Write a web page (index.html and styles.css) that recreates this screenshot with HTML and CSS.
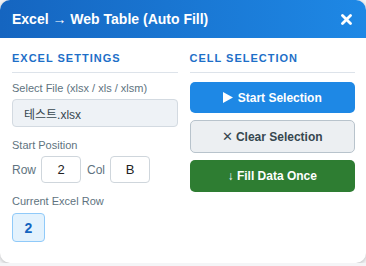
FILE: index.html
```html
<!doctype html>
<html>
    <head>
        <title>Excel to Web Table</title>
        <link rel="stylesheet" href="styles.css">
    </head>
    <body>
        <div class="panel">
            <div class="header">
                <span class="title">Excel → Web Table (Auto Fill)</span>
                <span class="close">
                    <svg width="11" height="11" viewBox="0 0 11 11"><path d="M1.5 1.5L9.5 9.5M9.5 1.5L1.5 9.5" stroke="#fff" stroke-width="2.8" stroke-linecap="round"/></svg>
                </span>
            </div>
            <div class="content">
                <div class="col">
                    <h3 class="section-title">Excel Settings</h3>
                    <div class="label">Select File (xlsx / xls / xlsm)</div>
                    <div class="file-box">테스트.xlsx</div>

                    <div class="label spaced">Start Position</div>
                    <div class="pos-row">
                        <span class="small-label">Row</span>
                        <div class="num-box">2</div>
                        <span class="small-label">Col</span>
                        <div class="num-box">B</div>
                    </div>

                    <div class="label spaced">Current Excel Row</div>
                    <div class="current-row">2</div>
                </div>
                <div class="col">
                    <h3 class="section-title">Cell Selection</h3>
                    <div class="buttons">
                        <button class="btn btn-start">
                            <svg width="10" height="11" viewBox="0 0 10 11"><path d="M0 0L10 5.5L0 11Z" fill="#fff"/></svg>
                            Start Selection
                        </button>
                        <button class="btn btn-clear"><span class="thin">✕</span> Clear Selection</button>
                        <button class="btn btn-fill">↓ Fill Data Once</button>
                    </div>
                </div>
            </div>
        </div>
    </body>
</html>
```

FILE: styles.css
```css
body{
    margin: 0;
    background: #f4f5f7;
    font-family: 'Liberation Sans', 'Noto Sans CJK KR', sans-serif;
}
.panel{
    width: 366px;
    height: 263px;
    background: #fff;
    border-radius: 10px;
    overflow: hidden;
    box-shadow: 0 1px 4px rgba(0,0,0,0.25);
}

/* HEADER */
.header{
    height: 38px;
    padding: 0 14px 0 12px;
    display: flex;
    align-items: center;
    justify-content: space-between;
    background: linear-gradient(to right, #1565c0, #1e88e5);
    color: #fff;
}
.title{
    font-size: 14px;
    font-weight: bold;
}
.close{
    display: flex;
    padding-top: 1px;
}
/* HEADER END */

.content{
    display: grid;
    grid-template-columns: 1fr 1fr;
    gap: 12px;
    padding: 0 11px 0 12px;
}
.section-title{
    margin: 0 0 9px 0;
    padding: 13px 0 7px 0;
    font-size: 11px;
    line-height: 14px;
    font-weight: bold;
    text-transform: uppercase;
    letter-spacing: 1px;
    color: #1e6fc8;
    border-bottom: 1px solid #dde3ea;
}
.label{
    font-size: 11px;
    line-height: 13px;
    color: #607380;
    margin-top: 2px;
}
.label.spaced{
    margin-top: 12px;
}
.file-box{
    margin-top: 4px;
    height: 28px;
    box-sizing: border-box;
    padding: 0 11px;
    display: flex;
    align-items: center;
    background: #eef2f6;
    border: 1px solid #d3dae1;
    border-radius: 4px;
    font-size: 12px;
    color: #37474f;
}
.pos-row{
    margin-top: 4px;
    display: flex;
    align-items: center;
}
.small-label{
    font-size: 12px;
    color: #607380;
    margin-right: 5px;
}
.num-box{
    width: 40px;
    height: 27px;
    box-sizing: border-box;
    border: 1px solid #cfd6dc;
    border-radius: 4px;
    display: flex;
    align-items: center;
    justify-content: center;
    font-size: 13px;
    color: #222;
    margin-right: 6px;
}
.current-row{
    margin-top: 5px;
    width: 33px;
    height: 29px;
    box-sizing: border-box;
    background: #e3f2fd;
    border: 1px solid #90caf9;
    border-radius: 4px;
    display: flex;
    align-items: center;
    justify-content: center;
    font-size: 14px;
    font-weight: bold;
    color: #1565c0;
}

.buttons{
    display: flex;
    flex-direction: column;
    gap: 7px;
}
.btn{
    height: 31px;
    border-radius: 5px;
    border: none;
    font-family: 'Liberation Sans', sans-serif;
    font-size: 12px;
    font-weight: bold;
    color: #fff;
    display: flex;
    align-items: center;
    justify-content: center;
    gap: 5px;
    cursor: pointer;
}
.btn-start{
    background: #1e88e5;
}
.btn-clear{
    background: #eceff2;
    border: 1px solid #b8c3cc;
    color: #37474f;
    height: 33px;
    gap: 3px;
}
.btn-clear .thin{
    font-weight: normal;
    font-size: 13px;
}
.btn-fill{
    background: #2e7d32;
    height: 32px;
}
```
